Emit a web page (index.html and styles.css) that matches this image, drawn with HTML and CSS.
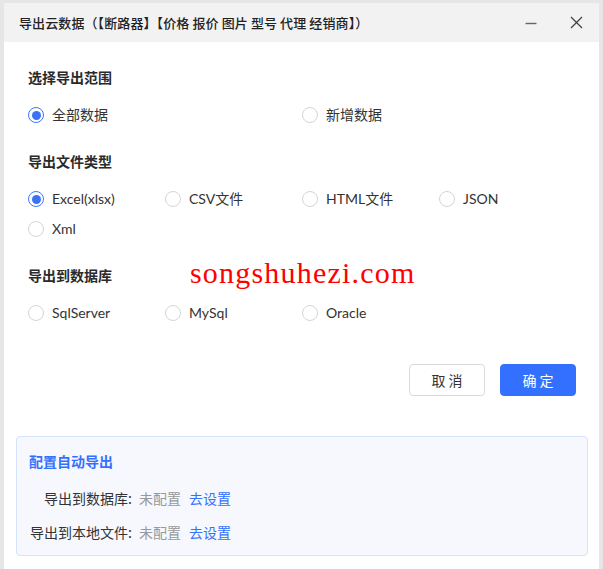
FILE: index.html
```html
<!DOCTYPE html>
<html lang="zh-CN">
<head>
<meta charset="utf-8">
<title>导出云数据</title>
<link rel="stylesheet" href="styles.css">
</head>
<body>
<div class="backdrop">
  <div class="dialog">
    <div class="titlebar">
      <div class="title">导出云数据（【断路器】【价格 报价 图片 型号 代理 经销商】）</div>
      <div class="win-btns">
        <span class="win-btn min"><svg width="12" height="12" viewBox="0 0 12 12"><path d="M0.5 6.5H11.5" stroke="#666" stroke-width="1.4"/></svg></span>
        <span class="win-btn close"><svg width="13" height="13" viewBox="0 0 13 13"><path d="M1 1L12 12M12 1L1 12" stroke="#444" stroke-width="1.3"/></svg></span>
      </div>
    </div>
    <div class="content">
      <div class="section-title first">选择导出范围</div>
      <div class="radio-grid">
        <label class="radio checked"><span class="dot"></span>全部数据</label>
        <span class="cell"></span>
        <label class="radio"><span class="dot"></span>新增数据</label>
      </div>

      <div class="section-title">导出文件类型</div>
      <div class="radio-grid">
        <label class="radio checked"><span class="dot"></span>Excel(xlsx)</label>
        <label class="radio"><span class="dot"></span>CSV文件</label>
        <label class="radio"><span class="dot"></span>HTML文件</label>
        <label class="radio"><span class="dot"></span>JSON</label>
        <label class="radio"><span class="dot"></span>Xml</label>
      </div>

      <div class="section-title">导出到数据库</div>
      <div class="radio-grid">
        <label class="radio"><span class="dot"></span>SqlServer</label>
        <label class="radio"><span class="dot"></span>MySql</label>
        <label class="radio"><span class="dot"></span>Oracle</label>
      </div>

      <div class="watermark">songshuhezi.com</div>
    </div>
    <div class="actions">
      <button class="btn">取 消</button>
      <button class="btn primary">确 定</button>
    </div>
    <div class="auto-box">
      <div class="auto-title">配置自动导出</div>
      <div class="auto-row"><span class="auto-label">导出到数据库:</span><span class="muted">未配置</span><a class="link">去设置</a></div>
      <div class="auto-row"><span class="auto-label">导出到本地文件:</span><span class="muted">未配置</span><a class="link">去设置</a></div>
    </div>
  </div>
</div>
</body>
</html>
```

FILE: styles.css
```css
* { box-sizing: border-box; }
html, body {
  margin: 0;
  padding: 0;
  width: 603px;
  height: 569px;
  overflow: hidden;
  background: #e6e6e6;
}
body {
  font-family: "Lato", "Noto Sans CJK SC", sans-serif;
  font-size: 14px;
  color: #333;
}
.backdrop {
  padding: 3px 4px 0 4px;
  height: 569px;
}
.dialog {
  width: 595px;
  height: 566px;
  background: #fff;
  position: relative;
}
.titlebar {
  height: 39px;
  background: #f2f2f2;
  display: flex;
  align-items: center;
  justify-content: space-between;
  padding: 0 16px 0 15px;
}
.title {
  font-size: 13px;
  color: #222;
  font-weight: 500;
  font-family: "Noto Sans CJK SC", sans-serif;
  letter-spacing: 0.1px;
}
.win-btns {
  display: flex;
  align-items: center;
  gap: 33px;
}
.win-btn { display: flex; }
.content {
  padding: 0 24px;
  position: relative;
}
.section-title {
  font-family: "Noto Sans CJK SC", sans-serif;
  font-weight: 700;
  font-size: 14px;
  line-height: 20px;
  color: #2a2a2a;
  margin-top: 26px;
  margin-bottom: 18px;
}
.section-title.first { margin-top: 25px; }
.radio-grid {
  display: grid;
  grid-template-columns: repeat(4, 137px);
  row-gap: 10px;
}
.radio {
  display: flex;
  align-items: center;
  gap: 8px;
  height: 20px;
  line-height: 20px;
  font-size: 14px;
  color: #333;
}
.dot {
  width: 16px;
  height: 16px;
  border-radius: 50%;
  border: 1px solid #d5d5d5;
  background: #fff;
  flex: none;
  display: flex;
  align-items: center;
  justify-content: center;
}
.radio.checked .dot { border-color: #3b78ff; }
.radio.checked .dot::after {
  content: "";
  width: 9px;
  height: 9px;
  border-radius: 50%;
  background: #3b72f6;
}
.watermark {
  position: absolute;
  left: 186px;
  top: 191px;
  font-family: "Liberation Serif", serif;
  font-size: 30px;
  font-weight: 300;
  color: #ff0000;
  letter-spacing: 1.2px;
  line-height: 30px;
}
.actions {
  display: flex;
  justify-content: flex-end;
  gap: 15px;
  padding: 0 23px 0 0;
  margin-top: 41px;
}
.btn {
  width: 76px;
  height: 32px;
  border-radius: 4px;
  border: 1px solid #d9d9d9;
  background: #fff;
  font-family: "Noto Sans CJK SC", sans-serif;
  font-size: 14px;
  color: #333;
  padding: 0;
}
.btn.primary {
  background: #3370ff;
  border-color: #3370ff;
  color: #fff;
}
.auto-box {
  margin: 40px 11px 0 12px;
  height: 120px;
  background: #f7f8fd;
  border: 1px solid #d5e3fb;
  border-radius: 4px;
  padding: 14px 12px 0 12px;
  font-family: "Noto Sans CJK SC", sans-serif;
}
.auto-title {
  color: #3370ff;
  font-weight: 700;
  font-size: 14px;
  line-height: 20px;
  margin-bottom: 17px;
}
.auto-row {
  display: flex;
  align-items: center;
  line-height: 20px;
  height: 20px;
  margin-bottom: 14px;
  font-size: 14px;
}
.auto-label {
  width: 103px;
  text-align: right;
  color: #333;
  margin-right: 7px;
}
.muted { color: #999; margin-right: 8px; }
.link { color: #3370ff; cursor: pointer; }
```
